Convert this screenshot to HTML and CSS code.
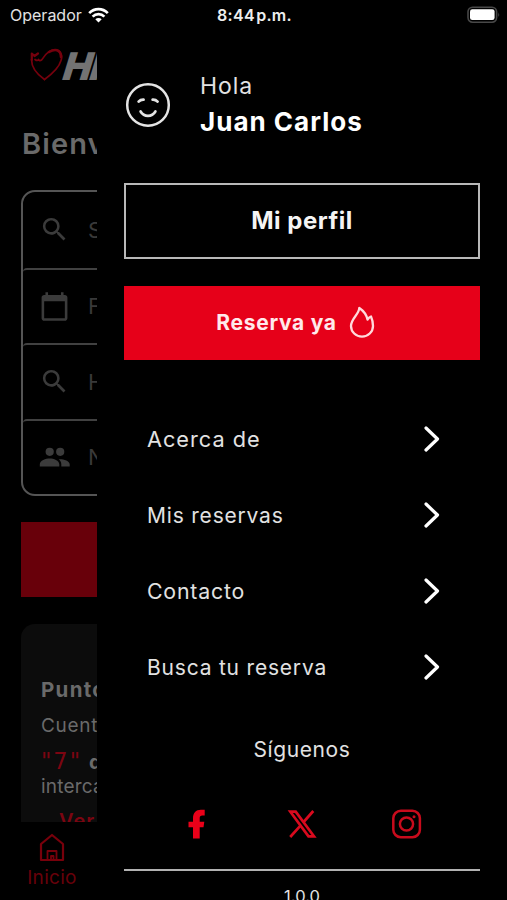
FILE: index.html
```html
<!DOCTYPE html>
<html lang="es">
<head>
<meta charset="utf-8">
<title>Menú</title>
<link rel="stylesheet" href="styles.css">
</head>
<body>
<header class="status">
  <div class="carrier"><span>Operador</span>
    <svg width="21" height="16" viewBox="0 0 21 16" fill="none" stroke="#fff" stroke-width="2.7"><path d="M1.2 6.1C6.4.9 14.6.9 19.8 6.1M4.6 9.6c3.3-3.3 8.5-3.3 11.8 0"/><path d="M10.5 15.4 7.3 12.2c1.8-1.7 4.6-1.7 6.4 0z" fill="#fff" stroke="none"/></svg>
  </div>
  <span class="clock">8:44 p.m.</span>
  <svg class="battery" width="34" height="18" viewBox="0 0 34 18"><rect x="1" y="1.2" width="28.6" height="15" rx="4.6" fill="none" stroke="#484848" stroke-width="1.6"/><rect x="3" y="3.3" width="24.6" height="10.8" rx="2.3" fill="#fff"/><path d="M31.3 6.3q1.7 2.3 0 4.8z" fill="#484848"/></svg>
</header>
<div class="body">
  <div class="page">
    <div class="logo">
      <svg width="34" height="34" viewBox="0 0 34 34" fill="none" stroke="#75000d" stroke-linecap="round" stroke-linejoin="round"><path d="M14.500 31.500C8 27 1.500 20 1.500 11.500" stroke-width="1.700"/><path d="M1.800 12V5.500L4.500 8 8 5.500" stroke-width="2.200"/><path d="M5 11.500q2.500 2 3.500 0 1 2 3 .5C14 10 15 4 23 2C30 0.500 33 7 31 12.500C29 20 22 26 14.500 31.500" stroke-width="1.700"/><path d="M19 4C24 1 31 0.500 31 9" stroke-width="2.600"/></svg>
      <span class="wordmark">HI</span>
    </div>
    <h1 class="welcome">Bienv</h1>
    <div class="form">
      <div class="field"><svg class="ico" viewBox="0 0 24 24"><path d="M15.500 14h-.790l-.280-.270A6.470 6.470 0 0 0 16 9.500 6.500 6.500 0 1 0 9.500 16c1.610 0 3.090-.590 4.230-1.570l.270.280v.790l5 4.990L20.490 19l-4.990-5zm-6 0C7.010 14 5 11.990 5 9.500S7.010 5 9.500 5 14 7.010 14 9.500 11.990 14 9.500 14z"/></svg><span>S</span></div>
      <div class="field"><svg class="ico" viewBox="0 0 24 24"><path d="M20 3h-1V1h-2v2H7V1H5v2H4c-1.100 0-2 .900-2 2v16c0 1.100.900 2 2 2h16c1.100 0 2-.900 2-2V5c0-1.100-.900-2-2-2zm0 18H4V8h16v13z"/></svg><span>F</span></div>
      <div class="field"><svg class="ico" viewBox="0 0 24 24"><path d="M15.500 14h-.790l-.280-.270A6.470 6.470 0 0 0 16 9.500 6.500 6.500 0 1 0 9.500 16c1.610 0 3.090-.590 4.230-1.570l.270.280v.790l5 4.990L20.490 19l-4.990-5zm-6 0C7.010 14 5 11.990 5 9.500S7.010 5 9.500 5 14 7.010 14 9.500 11.990 14 9.500 14z"/></svg><span>H</span></div>
      <div class="field"><svg class="ico" viewBox="0 0 31 31"><circle cx="10.700" cy="9.800" r="4.100"/><circle cx="21.200" cy="9.800" r="4.100"/><path d="M.8 24.500v-2.300c0-3.700 6-5.700 9.900-5.700s9.600 2 9.600 5.700v2.300zM22.300 24.500v-2.300c0-2-1-3.700-2.600-5 4.500-.3 11 1.500 11 5v2.300z"/></svg><span>N</span></div>
    </div>
    <div class="search"></div>
    <div class="card">
      <p class="points">Punto</p>
      <p class="count">Cuent</p>
      <p class="amount"><span class="num">"7"</span><b>d</b></p>
      <p class="count swap">interca</p>
      <p class="more">Ver</p>
    </div>
    <nav class="tab">
      <svg width="26" height="29" viewBox="0 0 26 29" fill="none" stroke="#78000b" stroke-width="2.200" stroke-linejoin="round"><path d="M2 27V11L13 2l11 9v16z"/><path d="M8.500 27v-9h9v9M12 27v-4h2.500v4" stroke-width="1.800"/></svg>
      <span>Inicio</span>
    </nav>
  </div>
  <aside class="drawer">
    <div class="user">
      <svg width="46" height="46" viewBox="0 0 46 46" fill="none" stroke="#e4e4e4" stroke-width="2.500" stroke-linecap="round"><circle cx="23" cy="23" r="20.800"/><path d="M13.600 19.600q2-2.200 5-2M27.600 17.600q3-.2 5 2M15.600 29.500c3.500 5.900 11.200 5.900 14.800 0" stroke-width="2.700"/></svg>
      <div class="who"><span class="hi">Hola</span><strong>Juan Carlos</strong></div>
    </div>
    <div class="btn outline">Mi perfil</div>
    <div class="btn solid"><span>Reserva ya</span><svg width="26" height="32" viewBox="0 0 26 32" fill="none" stroke="#ffd9dc" stroke-width="2.300" stroke-linejoin="round"><path d="M10.300 2C10 8.500 2 12.500 2 20a10.900 10.500 0 0 0 22 0c0-3.500-.8-6.800-2-9.500-1.600.6-2.600 1.700-3.500 3.100C17.500 8.500 14 4.500 10.300 2z"/></svg></div>
    <nav class="menu">
      <div class="item"><span>Acerca de</span><svg class="chev" viewBox="0 0 16 28"><path d="M2 3l11.500 11L2 25"/></svg></div>
      <div class="item"><span class="narrow">Mis reservas</span><svg class="chev" viewBox="0 0 16 28"><path d="M2 3l11.500 11L2 25"/></svg></div>
      <div class="item"><span class="mid">Contacto</span><svg class="chev" viewBox="0 0 16 28"><path d="M2 3l11.500 11L2 25"/></svg></div>
      <div class="item"><span class="narrow">Busca tu reserva</span><svg class="chev" viewBox="0 0 16 28"><path d="M2 3l11.500 11L2 25"/></svg></div>
    </nav>
    <p class="follow">Síguenos</p>
    <div class="social">
      <svg width="30" height="30" viewBox="0 0 30 30"><path d="M11 29.500V18.200H6.500v-5.400H11V9.500C11 4 13.900.7 18.900.7H22.700v5.700H20.300c-1.900 0-2.600.9-2.600 2.500v3.900h4.600l-.8 5.400h-3.800v11.300z" fill="#ea0019"/></svg>
      <svg width="30" height="30" viewBox="0 0 30 30" fill="none" stroke="#d90a1e" stroke-width="2.700"><path d="M3.300 2.700h5.400L27 27.300h-5.500z"/><path d="M26.300 2 16.600 13M13 17.200 3.200 28"/></svg>
      <svg width="30" height="30" viewBox="0 0 30 30" fill="none" stroke="#c80b1c" stroke-width="2.500"><rect x="1.300" y="1.800" width="26.600" height="26.400" rx="7.500"/><circle cx="14.500" cy="15" r="6.600"/><circle cx="22" cy="7.700" r="1.500" fill="#c80b1c" stroke="none"/></svg>
    </div>
    <p class="version">1.0.0</p>
  </aside>
</div>
</body>
</html>
```
FILE: styles.css
```css
* { box-sizing: border-box; }
html, body { margin: 0; height: 900px; overflow: hidden; }
body { background: #000; color: #e2e2e2; font-family: Inter, "Liberation Sans", sans-serif; display: flex; flex-direction: column; width: 507px; }
p, h1 { margin: 0; font-weight: 400; white-space: nowrap; }
svg { display: block; flex: none; }

.status { height: 30px; flex: none; display: grid; grid-template-columns: 1fr auto 1fr; align-items: center; padding: 0 8px 0 10px; }
.carrier { display: flex; gap: 6px; align-items: center; font-size: 16px; }
.clock { font-size: 16px; font-weight: 600; color: #eee; letter-spacing: .3px; word-spacing: -3px; }
.battery { justify-self: end; margin-right: -2px; }

.body { height: 870px; display: flex; }
.page { width: 97px; flex: none; overflow: hidden; padding-left: 21px; display: flex; flex-direction: column; color: #6a6a6a; }
.logo { display: flex; height: 34px; margin: 18px 0 0 9px; }
.wordmark { font: italic 900 38px/36px Inter, sans-serif; transform: skewX(-8deg); color: #737373; letter-spacing: -1.500px; }
.welcome { font-size: 29px; line-height: 36px; font-weight: 600; margin: 44px 0 0 1px; letter-spacing: 1.100px; }
.form { width: 465px; flex: none; height: 306px; margin-top: 28px; border: 2.500px solid #555; border-radius: 14px; overflow: hidden; display: grid; grid-template-rows: repeat(4, 1fr); }
.field { display: flex; align-items: center; gap: 18px; padding-left: 16px; color: #393939; font-size: 22px; }
.field + .field { border-top: 2px solid #414141; border-top-left-radius: 4px; }
.ico { width: 31px; height: 31px; fill: #3b3b3b; }
.search { width: 465px; height: 75px; flex: none; margin-top: 26px; background: #68000a; }
.card { width: 465px; height: 198px; flex: none; margin-top: 27px; padding: 52px 0 0 20px; background: #0c0c0c; border-radius: 14px 14px 0 0; overflow: hidden; }
.points { font-size: 20.500px; line-height: 28px; font-weight: 700; letter-spacing: 1.300px; }
.count { font-size: 19px; line-height: 26px; margin-top: 9px; letter-spacing: .7px; }
.amount { display: flex; align-items: baseline; gap: 7px; margin-top: 8px; font-size: 20px; line-height: 28px; }
.num { font-family: "DejaVu Sans", sans-serif; font-size: 22.500px; color: #7c0511; letter-spacing: 2px; }
.swap { margin-top: -2px; letter-spacing: .2px; }
.more { font-size: 20px; line-height: 26px; margin: 8px 0 0 18px; color: #7c0511; font-weight: 600; letter-spacing: 1px; }
.tab { width: 62px; margin-top: 11px; display: flex; flex-direction: column; align-items: center; color: #68000a; font-size: 19px; line-height: 24px; gap: 4px; letter-spacing: .3px; }

.drawer { flex: 1; padding: 0 27px; display: flex; flex-direction: column; }
.user { display: flex; align-items: center; height: 72px; flex: none; margin-top: 39px; gap: 29px; margin-left: 1px; }
.who { display: flex; flex-direction: column; white-space: nowrap; }
.hi { font-size: 23px; line-height: 34px; letter-spacing: .9px; }
.who strong { font-size: 26px; line-height: 38px; font-weight: 700; color: #fff; letter-spacing: 1px; }
.btn { display: flex; flex: none; align-items: center; justify-content: center; width: 356px; }
.outline { height: 76px; margin-top: 42px; padding-bottom: 2px; border: 2px solid #b8b8b8; font-size: 24px; font-weight: 700; color: #f4f4f4; letter-spacing: .5px; }
.solid { height: 74px; margin-top: 27px; background: #e60019; font-size: 21px; font-weight: 700; color: #ffe9eb; letter-spacing: .7px; gap: 12px; padding: 0 13px 2px 0; }
.menu { flex: none; margin-top: 41px; padding: 0 40px 0 23px; }
.item { height: 76px; display: flex; align-items: center; justify-content: space-between; font-size: 21.700px; letter-spacing: 1px; }
.narrow { font-size: 21px; letter-spacing: .8px; }
.mid { font-size: 21.300px; letter-spacing: .8px; }
.chev { width: 16px; height: 28px; fill: none; stroke: #fff; stroke-width: 3.200; stroke-linecap: round; stroke-linejoin: round; }
.follow { flex: none; text-align: center; font-size: 21px; line-height: 30px; margin-top: 30px; letter-spacing: .6px; }
.social { display: flex; flex: none; gap: 75px; padding-left: 58px; margin-top: 44px; }
.version { flex: none; margin-top: 30px; border-top: 2px solid #b2b2b2; padding-top: 15px; text-align: center; font-size: 16.500px; line-height: 20px; letter-spacing: 0; }
```
